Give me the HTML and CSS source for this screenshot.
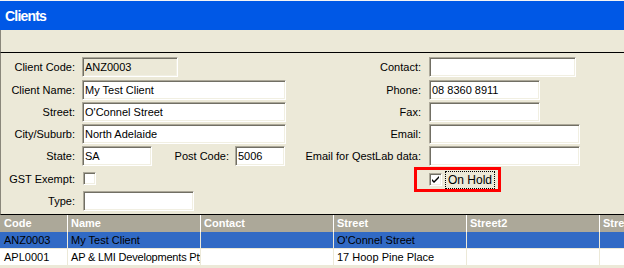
FILE: index.html
```html
<!DOCTYPE html>
<html>
<head>
<meta charset="utf-8">
<link rel="stylesheet" href="styles.css">
</head>
<body>
<div class="window">
  <div class="titlebar"><span class="title">Clients</span></div>
  <div class="toolbar"></div>
  <div class="form">
    <div class="col left">
      <div class="row first"><label class="lbl">Client Code:</label><div class="field disabled w95">ANZ0003</div></div>
      <div class="row"><label class="lbl">Client Name:</label><div class="field w203">My Test Client</div></div>
      <div class="row"><label class="lbl">Street:</label><div class="field w203">O'Connel Street</div></div>
      <div class="row"><label class="lbl">City/Suburb:</label><div class="field w203">North Adelaide</div></div>
      <div class="row"><label class="lbl">State:</label><div class="field w69">SA</div><label class="lbl2">Post Code:</label><div class="field w49">5006</div></div>
      <div class="row chkrow"><label class="lbl">GST Exempt:</label><span class="check"></span></div>
      <div class="row"><label class="lbl">Type:</label><div class="field w110 shift">&nbsp;</div></div>
    </div>
    <div class="col right">
      <div class="row first"><label class="lbl wide">Contact:</label><div class="field w147">&nbsp;</div></div>
      <div class="row"><label class="lbl wide">Phone:</label><div class="field w110">08 8360 8911</div></div>
      <div class="row"><label class="lbl wide">Fax:</label><div class="field w110">&nbsp;</div></div>
      <div class="row"><label class="lbl wide">Email:</label><div class="field w150">&nbsp;</div></div>
      <div class="row"><label class="lbl wide">Email for QestLab data:</label><div class="field w150">&nbsp;</div></div>
      <div class="hold">
        <span class="check checked"><svg width="9" height="9" viewBox="0 0 9 9"><path d="M1 4 L3 6 L8 1 L8 3 L3 8 L1 6 Z" fill="#000"/></svg></span>
        <span class="focus">On Hold</span>
      </div>
    </div>
  </div>
  <div class="grid">
    <div class="grow head">
      <div class="c c1">Code</div><div class="c">Name</div><div class="c">Contact</div><div class="c">Street</div><div class="c">Street2</div><div class="c last">Stre</div>
    </div>
    <div class="grow sel">
      <div class="c c1">ANZ0003</div><div class="c">My Test Client</div><div class="c"></div><div class="c">O'Connel Street</div><div class="c"></div><div class="c last"></div>
    </div>
    <div class="grow">
      <div class="c c1">APL0001</div><div class="c tight">AP &amp; LMI Developments Pty Ltd</div><div class="c"></div><div class="c">17 Hoop Pine Place</div><div class="c"></div><div class="c last"></div>
    </div>
  </div>
</div>
</body>
</html>
```
FILE: styles.css
```css
* { box-sizing: border-box; }
html, body { margin: 0; padding: 0; }
body {
  width: 624px;
  height: 268px;
  overflow: hidden;
  background: #ece9d8;
  font-family: "Liberation Sans", Arial, sans-serif;
  font-size: 11px;
  color: #000;
}
.window { width: 624px; }
.titlebar {
  height: 30px;
  border-top: 1px solid #f4f4f4;
  background: #0058e6;
  display: flex;
  align-items: center;
  padding-left: 5px;
}
.title {
  color: #fff;
  font-weight: bold;
  font-size: 14px;
  letter-spacing: -0.8px;
  padding-top: 1px;
}
.toolbar {
  height: 23px;
  background: #ece9d8;
  border-left: 1px solid #8a877b;
  border-bottom: 1px solid #000;
}
.form {
  height: 162px;
  display: flex;
  padding-top: 4px;
  border-left: 1px solid #8a877b;
  border-bottom: 1px solid #000;
}
.col { display: flex; flex-direction: column; }
.left { width: 289px; }
.right { flex: 1; }
.row {
  height: 20px;
  margin-bottom: 2px;
  display: flex;
  align-items: center;
}
.row.first { margin-bottom: 3px; }
.row.chkrow { height: 21px; }
.lbl {
  width: 74px;
  text-align: right;
  margin-right: 7px;
  white-space: nowrap;
}
.lbl.wide { width: 131px; margin-right: 8px; }
.lbl2 {
  width: 77px;
  text-align: right;
  margin-right: 6px;
}
.field {
  height: 20px;
  background: #fff;
  border-top: 1px solid #aca899;
  border-left: 1px solid #aca899;
  border-right: 1px solid #fff;
  border-bottom: 1px solid #fff;
  box-shadow: inset 1px 1px 0 #716f64, inset -1px -1px 0 #f1efe2;
  padding: 0 2px;
  line-height: 18px;
  white-space: nowrap;
  overflow: hidden;
}
.field.disabled { background: #ece9d8; }
.shift { margin-left: 1px; }
.w95 { width: 96px; }
.w203 { width: 204px; }
.w69 { width: 70px; }
.w49 { width: 50px; }
.w110 { width: 111px; }
.w147 { width: 147px; }
.w150 { width: 151px; }
.check {
  width: 13px;
  height: 13px;
  margin-left: 1px;
  background: #fff;
  border-top: 1px solid #aca899;
  border-left: 1px solid #aca899;
  border-right: 1px solid #fff;
  border-bottom: 1px solid #fff;
  box-shadow: inset 1px 1px 0 #716f64, inset -1px -1px 0 #f1efe2;
  display: flex;
  align-items: center;
  justify-content: center;
}
.check.checked { margin-left: 0; }
.check svg { display: block; }
.hold {
  margin-top: -1px;
  margin-left: 124px;
  width: 87px;
  height: 25px;
  border: 3px solid #ff0000;
  display: flex;
  align-items: center;
  padding-left: 12px;
}
.focus {
  margin-left: 3px;
  border: 1px dotted #000;
  padding: 1px 2px 1px 2px;
  font-size: 12px;
  line-height: 14px;
}
.grid {
  background: #ece9d8;
}
.grow {
  display: flex;
  height: 17px;
  background: #fff;
  border-bottom: 1px solid #ece9d8;
}
.grow .c {
  width: 133px;
  flex: none;
  border-right: 1px solid #ece9d8;
  padding-left: 3px;
  line-height: 16px;
  white-space: nowrap;
  overflow: hidden;
}
.grow .c.tight { letter-spacing: -0.2px; }
.grow .c.c1 { width: 68px; padding-left: 4px; }
.grow .c.last { flex: 1; border-right: none; }
.grow.head {
  height: 17px;
  background: #aca899;
  border-bottom: none;
  color: #fff;
  font-weight: bold;
}
.grow.head .c { border-right-color: #fff; line-height: 17px; }
.grow.sel { background: #316ac5; }
```
